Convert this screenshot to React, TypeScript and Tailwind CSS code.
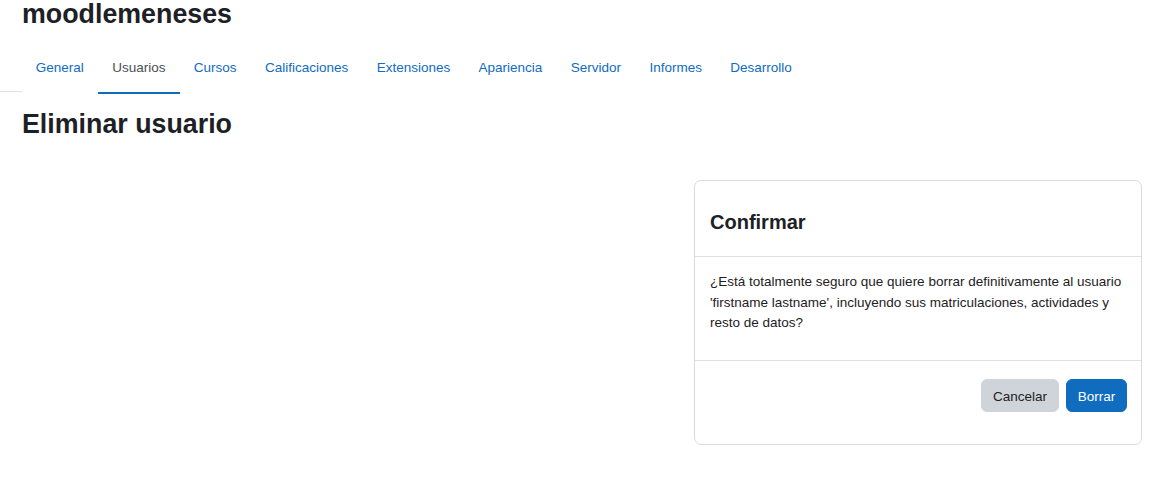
import React from "react";

const tabs = [
  "General",
  "Usuarios",
  "Cursos",
  "Calificaciones",
  "Extensiones",
  "Apariencia",
  "Servidor",
  "Informes",
  "Desarrollo",
];

export default function App() {
  return (
    <div
      className="w-[1160px] h-[480px] bg-white overflow-hidden text-[#1d2125]"
      style={{ fontFamily: '"Liberation Sans", Arial, sans-serif' }}
    >
      <h1 className="pl-[22px] text-[26.8px] font-bold leading-[29px]">moodlemeneses</h1>
      <nav className="flex mt-[13px]">
        <div className="w-[21.6px] h-px bg-[#dee2e6] self-end mb-[2px]" />
        {tabs.map((t) => {
          const active = t === "Usuarios";
          return (
            <a
              key={t}
              className={
                "relative px-[14.2px] pt-[16px] pb-[16px] text-[13.5px] leading-[20.25px] " +
                (active ? "text-[#4a4f55]" : "text-[#0f6cbf]")
              }
            >
              {t}
              {active && <span className="absolute left-0 right-0 bottom-0 h-[2.5px] bg-[#0f6cbf]" />}
            </a>
          );
        })}
      </nav>
      <h2 className="pl-[22px] mt-[15.5px] text-[26.8px] font-bold leading-[29px]">Eliminar usuario</h2>
      <div className="flex justify-end pr-[18px] mt-[41.5px]">
        <div className="w-[448px] border border-[#d9dcdf] rounded-[7px]">
          <div className="px-[15px] pt-[29px] pb-[22px] border-b border-[#dee2e6]">
            <h3 className="text-[20px] font-bold leading-[24px]">Confirmar</h3>
          </div>
          <div className="pl-[15px] pr-[16px] pt-[15px] pb-[27px] border-b border-[#dee2e6]">
            <p className="text-[13.5px] leading-[20.25px]">
              ¿Está totalmente seguro que quiere borrar definitivamente al usuario 'firstname lastname', incluyendo sus
              matriculaciones, actividades y resto de datos?
            </p>
          </div>
          <div className="flex justify-end gap-[7px] pr-[14px] pt-[18px] pb-[32px]">
            <button className="px-[10.8px] pt-[7px] pb-[3.8px] text-[13.5px] leading-[20.25px] rounded-[6px] bg-[#ced4da] border border-[#ced4da] text-[#1d2125]">
              Cancelar
            </button>
            <button className="px-[10.8px] pt-[7px] pb-[3.8px] text-[13.5px] leading-[20.25px] rounded-[6px] bg-[#0f6cbf] border border-[#0f6cbf] text-white">
              Borrar
            </button>
          </div>
        </div>
      </div>
    </div>
  );
}
